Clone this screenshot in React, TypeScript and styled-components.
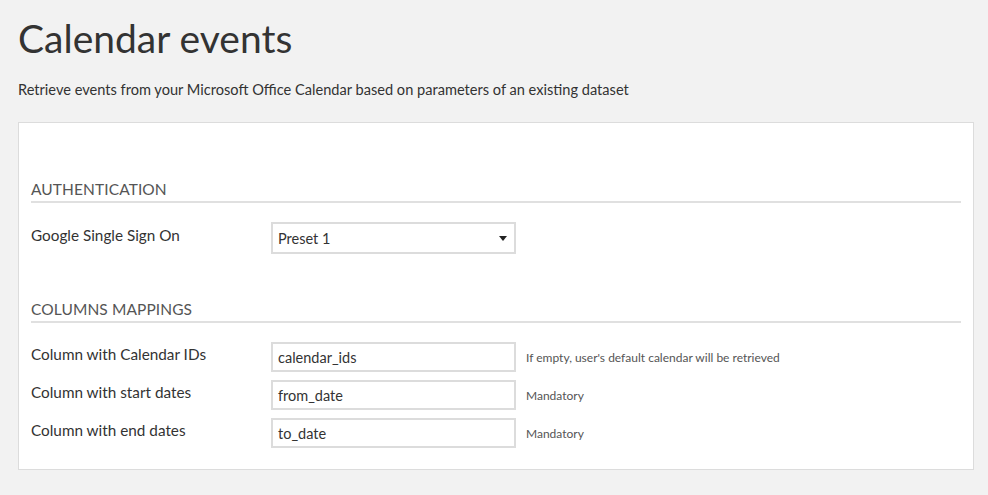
import styled, { createGlobalStyle } from 'styled-components';

const GlobalStyle = createGlobalStyle`
  html, body {
    margin: 0;
    padding: 0;
    background: #f2f2f2;
  }
  body {
    font-family: Lato, "Open Sans", "Liberation Sans", sans-serif;
    color: #333;
  }
`;

const Page = styled.div`
  padding: 12px 14px 26px 18px;
`;

const Title = styled.h1`
  margin: 0;
  font-size: 39px;
  font-weight: 400;
  line-height: 52px;
  color: #333;
`;

const Subtitle = styled.p`
  margin: 16px 0 0;
  font-size: 14.6px;
  line-height: 20px;
  color: #333;
`;

const Card = styled.div`
  margin-top: 22px;
  background: #fff;
  border: 1px solid #dcdcdc;
  padding: 56px 12px 21px 12px;
`;

const Section = styled.section`
  & + & {
    margin-top: 45px;
  }
`;

const SectionTitle = styled.h2`
  margin: 0;
  padding-bottom: 2px;
  font-size: 15.5px;
  font-weight: 400;
  line-height: 20px;
  color: #555;
  letter-spacing: 0.1px;
  border-bottom: 2px solid #e0e0e0;
`;

const Rows = styled.div<{ $top: number }>`
  display: flex;
  flex-direction: column;
  gap: 8px;
  margin-top: ${p => p.$top}px;
`;

const Row = styled.div`
  display: grid;
  grid-template-columns: 230px 245px auto;
  align-items: center;
  column-gap: 10px;
`;

const Label = styled.label`
  font-size: 15.3px;
  color: #333;
  line-height: 20px;
  margin-top: -6px;
`;

const Field = styled.div`
  box-sizing: border-box;
  height: 30px;
  border: 2px solid #dcdcdc;
  background: #fff;
  display: flex;
  align-items: center;
  padding: 0 7px 0 5px;
  font-size: 14.5px;
  color: #333;
`;

const SelectField = styled(Field)`
  height: 32px;
`;

const FieldText = styled.span`
  flex: 1;
`;

const Caret = styled.span`
  width: 0;
  height: 0;
  border-left: 4.5px solid transparent;
  border-right: 4.5px solid transparent;
  border-top: 5px solid #222;
`;

const Help = styled.span`
  font-size: 12px;
  color: #555;
`;

const mappings = [
  { label: 'Column with Calendar IDs', value: 'calendar_ids', help: "If empty, user's default calendar will be retrieved" },
  { label: 'Column with start dates', value: 'from_date', help: 'Mandatory' },
  { label: 'Column with end dates', value: 'to_date', help: 'Mandatory' },
];

export default function App() {
  return (
    <>
      <GlobalStyle />
      <Page>
        <Title>Calendar events</Title>
        <Subtitle>Retrieve events from your Microsoft Office Calendar based on parameters of an existing dataset</Subtitle>
        <Card>
          <Section>
            <SectionTitle>AUTHENTICATION</SectionTitle>
            <Rows $top={19}>
              <Row>
                <Label>Google Single Sign On</Label>
                <SelectField>
                  <FieldText>Preset 1</FieldText>
                  <Caret />
                </SelectField>
              </Row>
            </Rows>
          </Section>
          <Section>
            <SectionTitle>COLUMNS MAPPINGS</SectionTitle>
            <Rows $top={19}>
              {mappings.map(m => (
                <Row key={m.value}>
                  <Label>{m.label}</Label>
                  <Field>
                    <FieldText>{m.value}</FieldText>
                  </Field>
                  <Help>{m.help}</Help>
                </Row>
              ))}
            </Rows>
          </Section>
        </Card>
      </Page>
    </>
  );
}
